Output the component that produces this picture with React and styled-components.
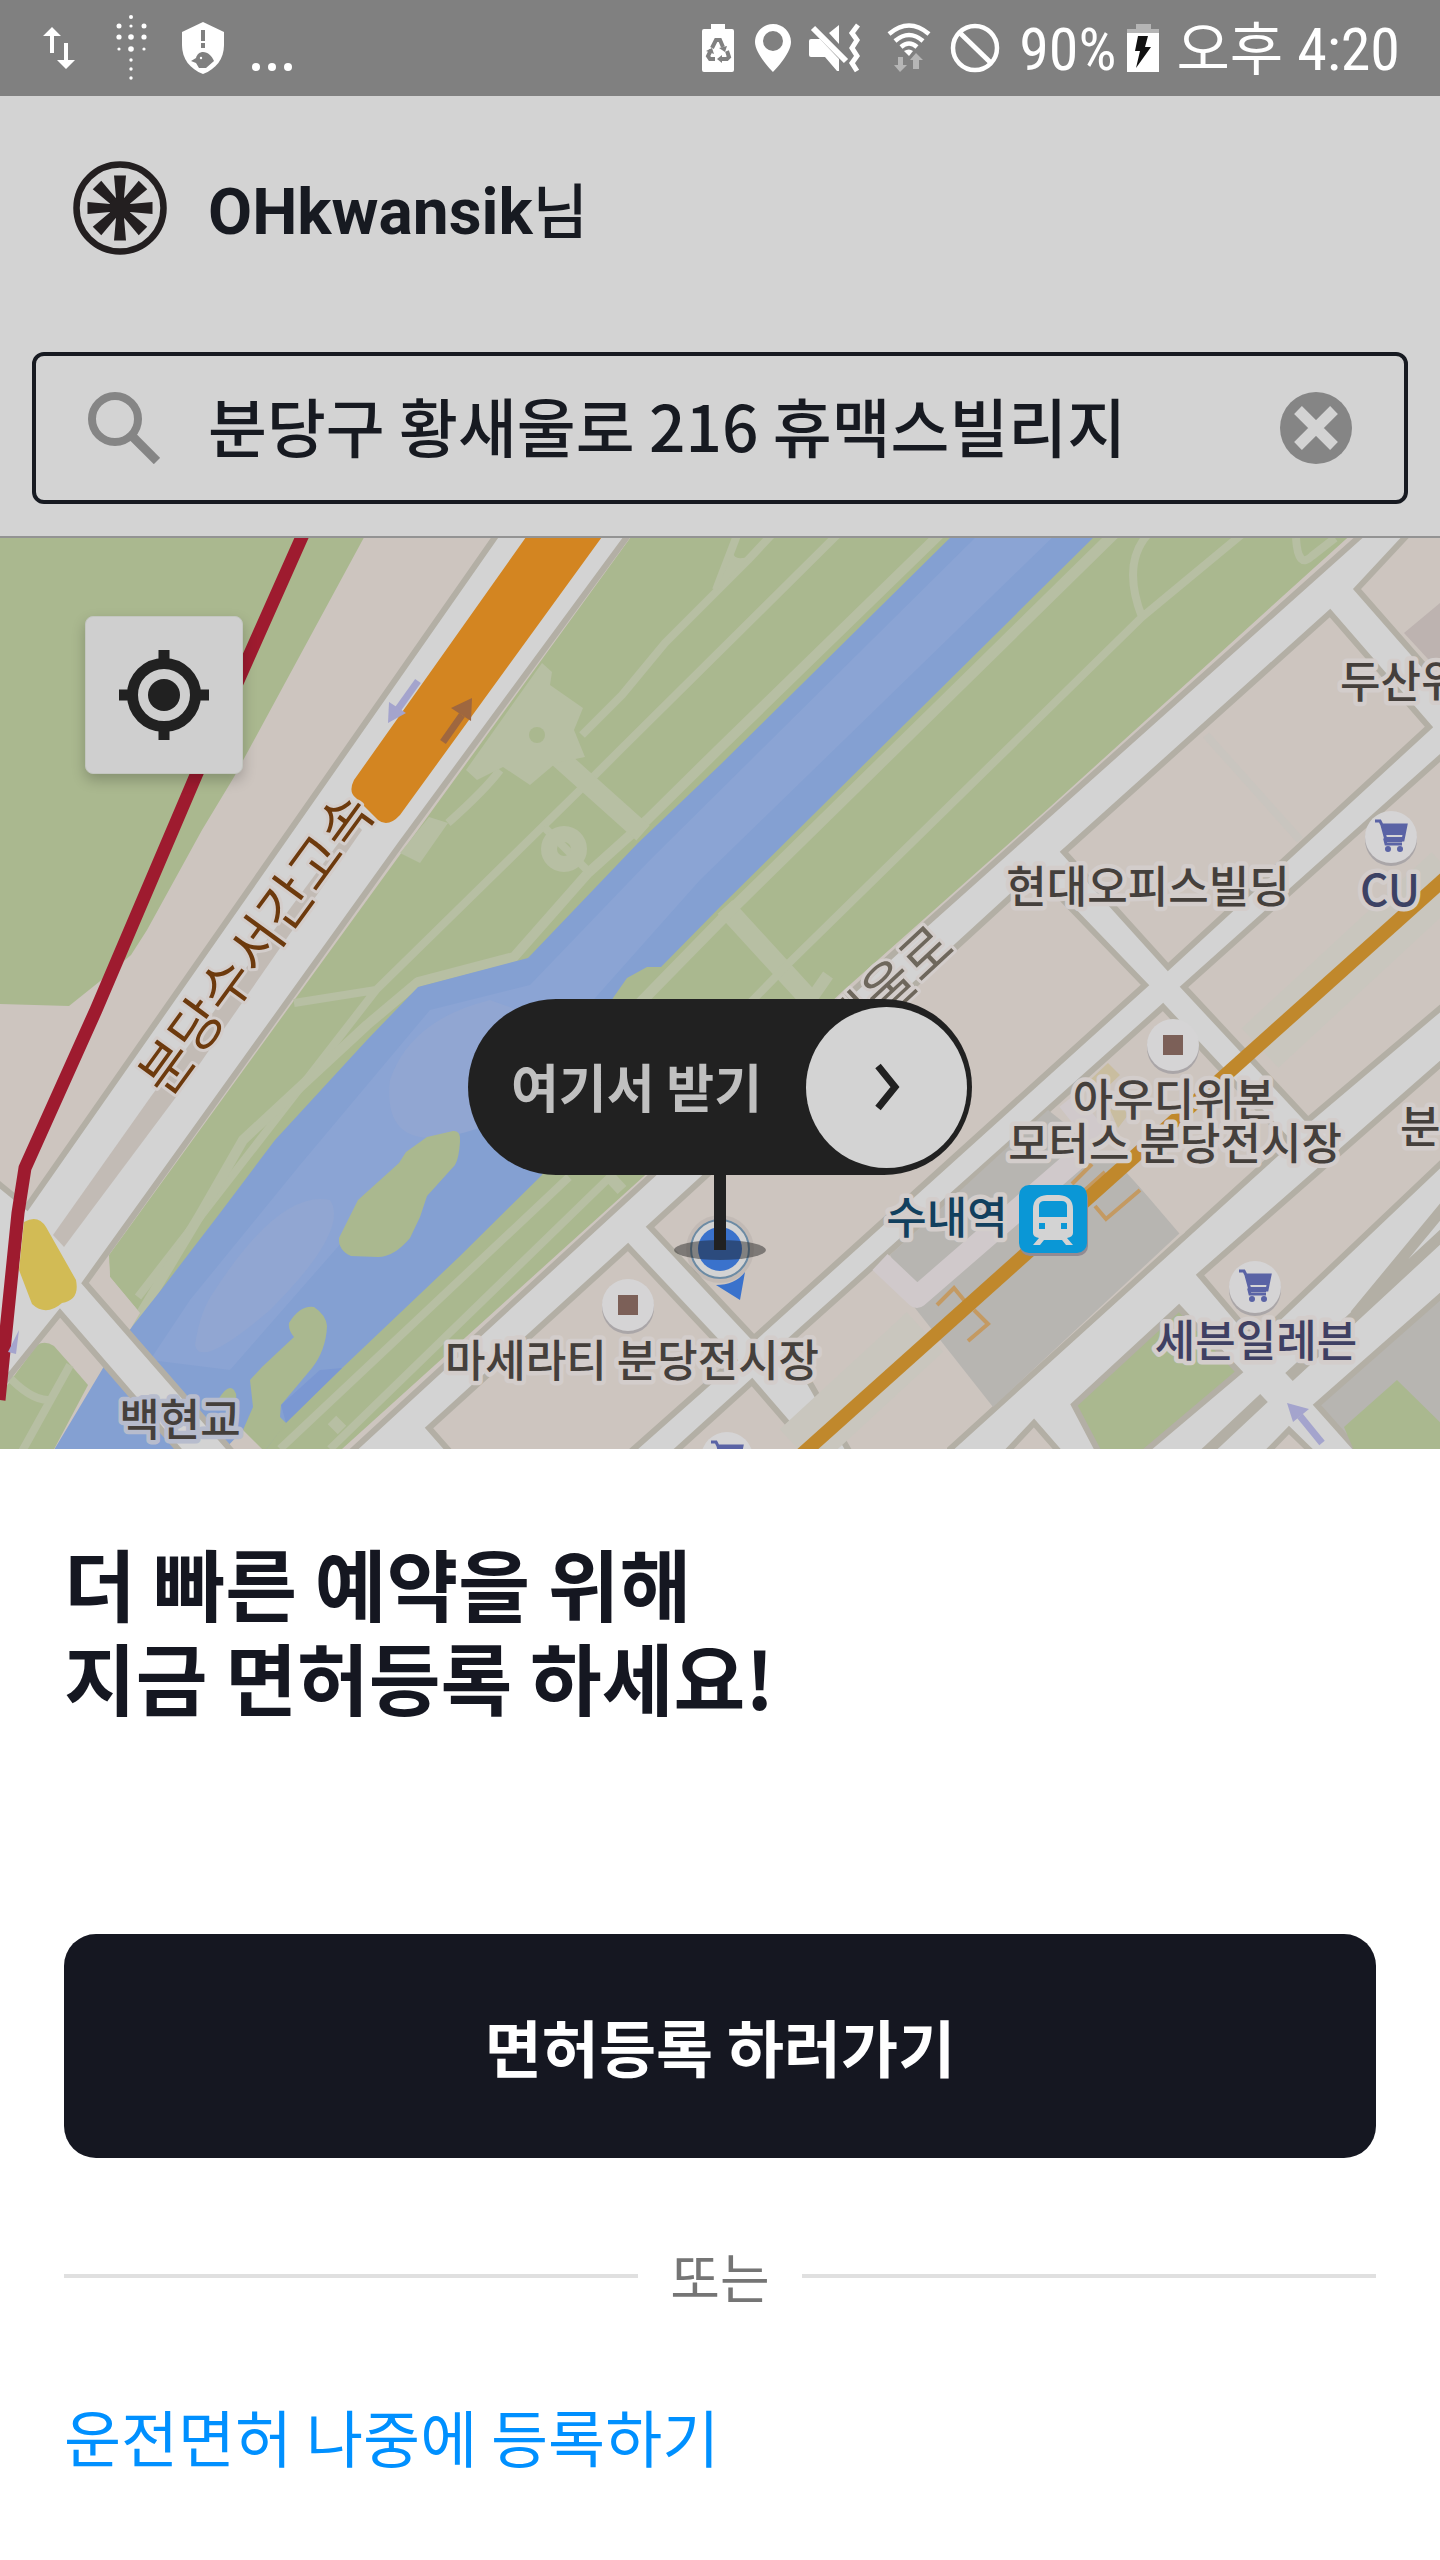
import React, { useState } from "react";
import styled, { createGlobalStyle } from "styled-components";

const KR = '"Noto Sans CJK KR", "Noto Sans", sans-serif';
const INK = "#151721";
const DIM = "#d3d3d3";

const GlobalStyle = createGlobalStyle`
  *, *::before, *::after { box-sizing: border-box; }
  body { margin: 0; background: #fff; font-family: ${KR}; color: ${INK}; }
  button, input { font: inherit; color: inherit; }
`;

const Screen = styled.div`
  display: flex;
  flex-direction: column;
  overflow: hidden;
`;

const StatusBar = styled.div`
  display: flex;
  align-items: center;
  justify-content: space-between;
  height: 96px;
  padding: 0 40px 0 35px;
  background: #808080;
  color: #fff;
`;

const StatusGroup = styled.div`
  display: flex;
  align-items: center;
  gap: ${(p) => p.$gap}px;
`;

const StatusIcon = styled.svg`
  display: block;
  flex: none;
  height: 96px;
  fill: currentColor;
`;

const StatusText = styled.span`
  font-family: "Roboto Condensed", "Liberation Sans Narrow", Roboto, ${KR};
  font-size: ${(p) => p.$size || 60}px;
  line-height: 96px;
  padding-top: 4px;
  white-space: nowrap;
`;

const Clock = styled.span`
  display: flex;
  gap: 14px;
`;

const Header = styled.header`
  padding: 64px 32px 32px;
  background: ${DIM};
  border-bottom: 2px solid #939393;
`;

const Profile = styled.div`
  display: flex;
  align-items: center;
  gap: 40px;
  height: 96px;
  margin-bottom: 96px;
  padding-left: 40px;
`;

const Avatar = styled.svg`
  flex: none;
  width: 96px;
  height: 96px;
`;

const UserName = styled.p`
  margin: 0;
  padding-top: 4px;
  font-family: Roboto, ${KR};
  font-size: 64px;
  font-weight: 700;
  line-height: 96px;
  color: #171a21;
`;

const Honorific = styled.span`
  font-family: ${KR};
  font-size: 60px;
  font-weight: 500;
`;

const SearchBox = styled.form`
  display: flex;
  align-items: center;
  height: 152px;
  padding: 0 52px;
  border: 4px solid #171a21;
  border-radius: 12px;
`;

const SearchIcon = styled.svg`
  flex: none;
  width: 72px;
  height: 72px;
`;

const SearchInput = styled.input`
  flex: 1;
  min-width: 0;
  height: 104px;
  margin: 0 48px;
  padding: 0 0 8px;
  border: 0;
  outline: 0;
  background: transparent;
  font-size: 64px;
  font-weight: 500;
  color: #171a21;
`;

const ClearButton = styled.button`
  display: block;
  width: 72px;
  height: 72px;
  padding: 0;
  border: 0;
  background: none;
`;

const MapArea = styled.section`
  position: relative;
  aspect-ratio: 1440 / 911;
  overflow: hidden;
`;

const MapCanvas = styled.svg`
  display: block;
  width: 100%;
  height: 100%;
`;

const LocateButton = styled.button`
  position: absolute;
  top: 78px;
  left: 85px;
  display: grid;
  place-items: center;
  width: 158px;
  height: 158px;
  padding: 0;
  border: 1px solid #c3c6c0;
  border-radius: 8px;
  background: #cfcfcf;
  box-shadow: 0 6px 14px rgba(0, 0, 0, 0.22);
`;

const Pin = styled.div`
  position: absolute;
  top: 461px;
  left: 50%;
  display: flex;
  flex-direction: column;
  align-items: center;
  transform: translateX(-50%);
`;

const PinButton = styled.button`
  display: flex;
  align-items: center;
  justify-content: space-between;
  width: 504px;
  height: 176px;
  padding: 0 5px 0 43px;
  border: 0;
  border-radius: 88px;
  background: #212121;
  color: #c0c0c0;
  font-size: 52px;
  font-weight: 700;
  white-space: nowrap;
`;

const PinLabel = styled.span`
  padding-bottom: 4px;
`;

const PinArrow = styled.span`
  display: grid;
  place-items: center;
  width: 161px;
  height: 161px;
  border-radius: 50%;
  background: ${DIM};
`;

const PinStem = styled.span`
  width: 12px;
  height: 75px;
  background: #212121;
`;

const Sheet = styled.main`
  display: flex;
  flex-direction: column;
  align-items: stretch;
  padding: 86px 64px 64px;
  background: #fff;
`;

const Title = styled.h1`
  margin: 0 0 211px;
  font-size: 78px;
  font-weight: 700;
  line-height: 94px;
`;

const PrimaryButton = styled.button`
  height: 224px;
  border: 0;
  border-radius: 32px;
  background: ${INK};
  color: #fff;
  font-size: 62px;
  font-weight: 700;
`;

const Divider = styled.div`
  display: flex;
  align-items: center;
  gap: 32px;
  margin: 80px 0 76px;
  font-size: 54px;
  line-height: 76px;
  color: #757575;

  &::before, &::after {
    content: "";
    flex: 1;
    height: 4px;
    background: #e0e0e0;
  }
`;

const LaterLink = styled.a`
  align-self: flex-start;
  font-size: 62px;
  line-height: 92px;
  color: #0090ff;
  text-decoration: none;
`;

function StatusIcons() {
  return (
    <StatusGroup $gap={24}>
      <StatusIcon width="48" viewBox="35 0 48 96">
        <path d="M52 27l9 9h-7v17h-4V36h-7zM66 69l-9-9h7V43h4v17h7z" />
      </StatusIcon>
      <StatusIcon width="48" viewBox="107 0 48 96">
        {[[131, 17, 2], [119, 26, 2.5], [131, 26, 1.6], [144, 26, 2.5], [119, 37, 2.6], [131, 37, 2.8], [144, 37, 2.6],
          [119, 49, 1.6], [131, 49, 2.8], [144, 49, 1.6], [131, 60, 1.7], [131, 69, 1.7], [131, 78, 1.7]].map(([x, y, r]) => (
          <circle key={`${x}-${y}`} cx={x} cy={y} r={r} />
        ))}
      </StatusIcon>
      <StatusIcon width="48" viewBox="179 0 48 96">
        <path d="M203 22l21 10v13c0 14-8 24-21 29-13-5-21-15-21-29V32z" />
        <path fill="#808080" d="M201 30h4v11h-4zM201 43h4v5h-4zM191 61l5-3c1-4 4-6 7-6 5 0 9 4 11 9l-8 7h-7l-3-5z" />
        <circle cx="201" cy="58" r="1.2" />
      </StatusIcon>
      <StatusIcon width="48" viewBox="251 0 48 96">
        <circle cx="256" cy="67" r="4" /><circle cx="272" cy="67" r="4" /><circle cx="288" cy="67" r="4" />
      </StatusIcon>
    </StatusGroup>
  );
}

function SystemIcons() {
  return (
    <StatusGroup $gap={17}>
      <StatusIcon width="36" viewBox="702 0 36 96">
        <path d="M711 24h14v5h7q2 0 2 2v39q0 2-2 2h-28q-2 0-2-2V31q0-2 2-2h7z" />
        <path fill="none" stroke="#808080" strokeWidth="4" d="M712 48l4-8h4l3 7M727 51l2 6-2 2h-6M715 59h-5l-2-3 3-6" />
        <path fill="#808080" d="M719 48l8-2-2 6zM722 55v8l-5-4zM706 51l6-3 2 6z" />
      </StatusIcon>
      <StatusIcon width="36" viewBox="756 0 36 96">
        <path fillRule="evenodd" d="M774 24c10 0 18 8 18 18 0 12-18 30-18 30s-18-18-18-30c0-10 8-18 18-18zm0 7a10 10 0 1 0 0 20 10 10 0 0 0 0-20z" />
      </StatusIcon>
      <StatusIcon width="56" viewBox="810 0 56 96">
        <path d="M841 25v19l-10-11zM813 39h9l19 20v12h-2l-12-14h-14q-2 0-2-2V41q0-2 2-2z" />
        <path d="M815 28l33 33" fill="none" stroke="#fff" strokeWidth="6" />
        <path d="M860 25l-6 8 5 7-5 8 5 8-5 7 5 8" fill="none" stroke="#fff" strokeWidth="5" />
      </StatusIcon>
      <StatusIcon width="52" viewBox="885 0 52 96">
        <path fill="none" stroke="#fff" strokeWidth="4.5" d="M893 34q20-17 40 0M899 41q14-12 28 0M905 47q8-7 16 0" />
        <path d="M908 51q5-3 9 0l-4 5z" />
        <path fill="#b5b5b5" d="M902 57h5v8h4l-7 7-6-7h4zM917 69h6v-9h4l-7-7-6 7h3z" />
      </StatusIcon>
      <StatusIcon width="52" viewBox="950 0 52 96">
        <circle cx="975" cy="48" r="22" fill="none" stroke="#fff" strokeWidth="4.5" />
        <path d="M960 33l31 30" stroke="#fff" strokeWidth="5" />
      </StatusIcon>
      <StatusGroup $gap={11}>
        <StatusText>90%</StatusText>
        <StatusIcon width="32" viewBox="1129 0 32 96">
          <path fill="#b5b5b5" d="M1138 24h15v5h8v5h-32v-5h9z" />
          <path d="M1129 33h32v39h-32z" />
          <path fill="#111" d="M1140 36h10l-3 11h6l-15 21 4-17h-5z" />
        </StatusIcon>
      </StatusGroup>
      <Clock>
        <StatusText $size={58}>오후</StatusText>
        <StatusText>4:20</StatusText>
      </Clock>
    </StatusGroup>
  );
}

function BrandMark() {
  return (
    <Avatar viewBox="0 0 96 96" aria-hidden="true">
      <circle cx="48" cy="48" r="43.500" fill="none" stroke="#231f20" strokeWidth="6.5" />
      <g fill="#231f20">
        {[0, 45, 90, 135, 180, 225, 270, 315].map((a) => (
          <path key={a} d="M42 15.500h12l-2.500 28v5h-7v-5z" transform={`rotate(${a} 48 48)`} />
        ))}
        <circle cx="48" cy="48" r="11" />
      </g>
    </Avatar>
  );
}

const blocks = [
  "M1330 613L1429 727L1168 967L1064 852Z",
  "M1037 873L1145 985L754 1338L650 1227Z",
  "M1163 1007L1289 1142L950 1449V1470H860L787 1343Z",
  "M1184 987L1450 749V1000L1308 1120Z",
  "M1200 1275L1450 1056V1155L1255 1340Z",
  "M1412 530L1357 589L1450 695V530Z",
  "M628 1247L734 1360L610 1470H466L429 1428Z",
  "M752 1382L828 1470H655Z",
  "M1034 1423L990 1470H1075Z",
  "M1289 1430L1250 1470H1330Z",
];

const cart = "M-16-16h5l2 4h24l-3 15h-18l1 4h16M-9-12l4 15";

function Poi({ x, y, kind }) {
  return (
    <g transform={`translate(${x} ${y})`}>
      <circle cy="3" r="26" fill="#aaa6a8" />
      <circle r="26" fill="#d5d4d5" />
      {kind === "cart" ? (
        <>
          <path d={cart} fill="none" stroke="#5a63a5" strokeWidth="3" />
          <path d="M-10-11h25l-2 9h-19zM-6 0h18l-1 5h-16z" fill="#5a63a5" />
          <circle cx="-3" cy="12" r="3" fill="#5a63a5" /><circle cx="9" cy="12" r="3" fill="#5a63a5" />
        </>
      ) : (
        <rect x="-10" y="-10" width="20" height="20" fill="#7c6058" />
      )}
    </g>
  );
}

function CityMap() {
  return (
    <MapCanvas viewBox="0 538 1440 911" preserveAspectRatio="xMidYMid slice" role="img" aria-label="지도">
      <rect y="530" width="1440" height="930" fill="#cdc5bf" />
      <path fill="#aab88f" d="M0 530H368L234 777L202 830L147 930L131 955L99 982L69 1006L0 1004Z" />
      <path fill="#aab88f" d="M636 530H1356L1050 807L844 990L643 1177L342 1449H55L140 1313L110 1277L109 1255Z" />

      <g fill="none" stroke="#b7bfa3" strokeWidth="8" strokeLinejoin="round">
        <path d="M842 530L620 750L583 787L376 990L294 1003M376 990L138 1297" />
        <path strokeWidth="10" d="M944 530L720 748L647 820L588 873L514 957L418 982L367 1025L243 1140L200 1215L122 1345" />
        <path strokeWidth="20" d="M556 755L643 833M725 907L812 1002" />
        <path strokeWidth="11" d="M1118 530L729 912L640 1003" />
        <path d="M1247 530L1142 617L789 963L750 1003M1152 530Q1120 560 1142 617M1296 538Q1298 570 1312 556L1335 538" />
        <path d="M612 1175L330 1449M569 1177L280 1449M500 770Q485 790 448 823M544 827L590 873" />
        <path d="M776 530L748 560L665 643L622 695L582 735M739 530L716 590" />
        <path strokeWidth="12" d="M608 1175L622 1190M332 1420L342 1430M828 975L812 998" />
      </g>
      <path fill="#b7bfa3" d="M542 663L552 672L550 685L583 708L574 730L585 757L556 763L530 785L503 767L477 780L466 770ZM429 817L448 823L420 863L400 853ZM733 552Q734 562 750 556L716 592Z" />
      <circle cx="564" cy="849" r="15" fill="none" stroke="#b7bfa3" strokeWidth="16" />
      <circle cx="537" cy="735" r="8" fill="#aab88f" />

      <path fill="#84a0d2" d="M958 530L720 765L638 843L528 958L418 987L367 1040L275 1140L220 1213L161 1290L131 1328L103 1368L51 1455H262L285 1423L340 1370L459 1257L542 1175L613 998L627 978L647 967H661L720 907L1101 530Z" />
      <path fill="#8ba4d4" d="M983 530L650 860L530 985L430 1010L300 1165L190 1300L150 1360L230 1370L370 1210L540 1060L700 880L1060 530Z" />
      <path fill="#91a6d2" d="M390 1080Q410 1020 490 1000L600 1040L500 1120Q380 1170 390 1080ZM215 1290Q280 1190 330 1200Q350 1230 270 1310Q200 1370 195 1345Q200 1310 215 1290Z" />
      <g fill="#aab88f" strokeLinejoin="round">
        <path d="M453 1131Q461 1130 460 1142Q459 1158 455 1165L427 1196L420 1217L410 1238Q394 1257 378 1257L351 1256Q338 1250 339 1238L358 1200L399 1163L406 1152L427 1137Z" />
        <path d="M289 1323Q300 1305 314 1307Q326 1315 327 1326Q326 1350 312 1368L281 1405L280 1417L286 1423L262 1455L243 1430L253 1407L250 1380L262 1367L294 1337Q288 1330 289 1323Z" />
        <path d="M218 1400Q228 1383 234 1390Q240 1398 231 1406Z" />
      </g>
      <path fill="#7b98d2" d="M281 1405L320 1370L342 1368L286 1423Z" />

      <path fill="#cdc5bf" d="M87 1275L109 1263L110 1277L140 1313L131 1328L103 1367L88 1386L60 1350L30 1350L60 1313ZM243 1430L262 1449H225Z" />
      <path fill="#aab88f" d="M0 1395L37 1345Q45 1340 54 1346L69 1363L88 1385L51 1455H0Z" />
      <path fill="none" stroke="#b7bfa3" strokeWidth="8" d="M5 1373Q30 1400 48 1400M70 1365L20 1455" />

      <path fill={DIM} stroke="#b3afa5" strokeWidth="6" d="M500 530L27 1207L-6 1180V1395L60 1313L184 1456H236L85 1283L400 845L632 530Z" />
      <path fill="#c2bbb5" d="M53 1235L64 1247L185 1085L362 830L354 822L152 1095Z" />
      <path fill="#d38521" d="M531 530L354 780Q348 792 356 798L378 820Q388 828 400 815L607 530Z" />

      <path fill={DIM} d="M1367 530L1358 538L927 923L650 1177L340 1462H1460V530Z" />
      <path fill="none" stroke="#b3afa5" strokeWidth="6" d="M1367 530L1358 538L927 923L650 1177L340 1462" />
      <g fill="#cdc5bf" stroke="#b3afa5" strokeWidth="6">
        {blocks.map((d) => <path key={d} d={d} />)}
        <path fill="#b7b5b1" d="M1317 1405L1450 1288V1460H1366Z" />
        <path fill="#aab88f" d="M1179 1308L1239 1372L1130 1464L1105 1464L1074 1405Z" />
      </g>
      <path fill="#aab88f" d="M1397 1380L1450 1432V1460H1358L1344 1427Z" />
      <path fill="#bdb3b0" d="M1404 633L1440 603V672Z" />
      <path fill="none" stroke="#b3afa5" strokeWidth="11" d="M1289 1377L1450 1228M1264 1398L1200 1458M1355 1315L1450 1200" />
      <path fill="none" stroke="#c9c5bf" strokeWidth="8" d="M1206 735L1300 840" />
      <path fill="none" stroke="#c9c6be" strokeWidth="54" d="M1450 872L1260 1048M925 1332L798 1449" />

      <path fill="#b7b5b1" d="M1048 1110L1124 1170L1181 1232L993 1407L915 1308L890 1255Z" />
      <path fill="none" stroke="#d0c9cb" strokeWidth="22" strokeLinejoin="round" d="M880 1262L917 1297L1075 1160L1092 1130L1068 1100" />
      <path fill="none" stroke="#cdc5bf" strokeWidth="5" d="M1124 1165L1183 1234" />
      <path fill="#c9bd9f" d="M1108 1063L1120 1075L1100 1094L1090 1080ZM1118 1100L1128 1115L1118 1128L1110 1110Z" />
      <path fill="none" stroke="#c49a62" strokeWidth="4" d="M1140 1190L1106 1219L1095 1206M1072 1184L1092 1164M937 1305L954 1288L968 1305M968 1341L988 1324L974 1310M1085 1190L1105 1172" />
      <path fill="none" stroke="#c0882c" strokeWidth="14" d="M1450 874L790 1465" />
      <path fill="none" stroke="#9e1b2f" strokeWidth="13" strokeLinejoin="round" d="M305 530L197 773L96 1010L25 1168L18 1213L-1 1400" />
      <path fill="#d2bb55" d="M24 1222Q38 1214 46 1227L76 1280Q80 1300 62 1303Q46 1317 32 1304L19 1270Z" />

      <g fill="none" strokeWidth="7">
        <path stroke="#a4a4cd" d="M418 681L398 709" /><path stroke="#9f673f" d="M443 742L462 715" /><path stroke="#a4a4cd" d="M1322 1443L1300 1416" />
      </g>
      <path fill="#a4a4cd" d="M388 723L389 702L406 713ZM1287 1403L1309 1409L1293 1422ZM8 1352L19 1330L16 1354Z" />
      <path fill="#9f673f" d="M472 698L471 721L451 708Z" />

      <g fontFamily={KR} fontSize="44" fontWeight="500" fill="#45403c" stroke="#d3cdcb" strokeWidth="9" strokeLinejoin="round" style={{ paintOrder: "stroke" }}>
        <text x="1340" y="698">두산위</text>
        <text x="1148" y="903" textAnchor="middle">현대오피스빌딩</text>
        <text x="1390" y="906" textAnchor="middle" fill="#3c4264">CU</text>
        <text y="1116" textAnchor="middle">
          <tspan x="1174">아우디위본</tspan>
          <tspan x="1175" dy="44">모터스 분당전시장</tspan>
        </text>
        <text x="1400" y="1143">분</text>
        <text x="947" y="1234" textAnchor="middle" fill="#12405e">수내역</text>
        <text x="1256" y="1357" textAnchor="middle" fill="#3f4063">세븐일레븐</text>
        <text x="632" y="1377" textAnchor="middle">마세라티 분당전시장</text>
        <text x="180" y="1436" textAnchor="middle" stroke="#b7bccd">백현교</text>
        <text transform="translate(168 1099) rotate(-54)" fontSize="55" fontWeight="400" fill="#6d3a0d" strokeWidth="6">분당수서간고속</text>
        <text transform="translate(957 950) rotate(-43)" fontSize="54" fontWeight="400" textAnchor="end" fill="#6e675c" strokeWidth="6">황새울로</text>
      </g>

      <Poi x={1391} y={837} kind="cart" />
      <Poi x={1255} y={1287} kind="cart" />
      <Poi x={727} y={1458} kind="cart" />
      <Poi x={1173} y={1045} />
      <Poi x={628} y={1305} />

      <rect x="1020" y="1188" width="68" height="68" rx="10" fill="#918b93" />
      <rect x="1019" y="1185" width="68" height="68" rx="10" fill="#0a97d6" />
      <path fill={DIM} fillRule="evenodd" d="M1047 1195h12q14 1 14 14v24q0 4-6 5l6 7h-7l-4-5h-18l-4 5h-7l6-7q-6-1-6-5v-24q0-13 14-14zm-8 10v12h28v-12q-1-4-5-4h-18q-4 0-5 4zm0 18v6h6v-6zm22 0v6h6v-6z" />

      <circle cx="720" cy="1249" r="34" fill="#000" opacity=".05" />
      <circle cx="720" cy="1249" r="29" fill="#d3d3d3" stroke="#6c8ba4" strokeWidth="2" />
      <circle cx="720" cy="1249" r="22" fill="#3a72cc" />
      <path fill="#3a72cc" d="M716 1285Q735 1285 745 1272L740 1300Z" />
      <ellipse cx="720" cy="1250" rx="46" ry="10" fill="#1c1c1c" opacity=".45" />
    </MapCanvas>
  );
}

export default function App() {
  const [address, setAddress] = useState("분당구 황새울로 216 휴맥스빌리지");
  return (
    <Screen>
      <GlobalStyle />
      <StatusBar>
        <StatusIcons />
        <SystemIcons />
      </StatusBar>
      <Header>
        <Profile>
          <BrandMark />
          <UserName>OHkwansik<Honorific>님</Honorific></UserName>
        </Profile>
        <SearchBox role="search" onSubmit={(e) => e.preventDefault()}>
          <SearchIcon viewBox="0 0 72 72" aria-hidden="true">
            <circle cx="27" cy="27" r="23" fill="none" stroke="#858585" strokeWidth="8" />
            <path d="M45 45l24 24" stroke="#858585" strokeWidth="9" />
          </SearchIcon>
          <SearchInput aria-label="주소 검색" value={address} onChange={(e) => setAddress(e.target.value)} />
          <ClearButton type="button" aria-label="지우기" onClick={() => setAddress("")}>
            <svg width="72" height="72" viewBox="0 0 72 72">
              <circle cx="36" cy="36" r="36" fill="#858585" />
              <path d="M18 18l36 36M54 18L18 54" stroke={DIM} strokeWidth="11" />
            </svg>
          </ClearButton>
        </SearchBox>
      </Header>
      <MapArea>
        <CityMap />
        <LocateButton type="button" aria-label="내 위치">
          <svg width="90" height="90" viewBox="0 0 90 90">
            <circle cx="45" cy="45" r="31.500" fill="none" stroke="#212121" strokeWidth="11" />
            <circle cx="45" cy="45" r="16" fill="#212121" />
            <path d="M45 0v12M45 78v12M0 45h12M78 45h12" stroke="#212121" strokeWidth="11" />
          </svg>
        </LocateButton>
        <Pin>
          <PinButton type="button">
            <PinLabel>여기서 받기</PinLabel>
            <PinArrow>
              <svg width="28" height="48" viewBox="0 0 28 48">
                <path d="M5 3l17 21L5 45" fill="none" stroke="#212121" strokeWidth="7" />
              </svg>
            </PinArrow>
          </PinButton>
          <PinStem />
        </Pin>
      </MapArea>
      <Sheet>
        <Title>더 빠른 예약을 위해<br />지금 면허등록 하세요!</Title>
        <PrimaryButton type="button">면허등록 하러가기</PrimaryButton>
        <Divider>또는</Divider>
        <LaterLink href="#later">운전면허 나중에 등록하기</LaterLink>
      </Sheet>
    </Screen>
  );
}
